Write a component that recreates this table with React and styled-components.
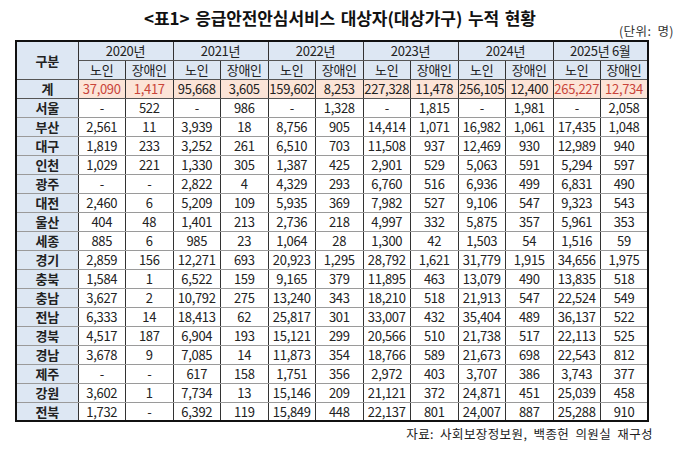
import styled, { createGlobalStyle } from 'styled-components';

const GlobalStyle = createGlobalStyle`
  html, body {
    margin: 0;
    padding: 0;
    background: #ffffff;
  }
  body {
    font-family: "Noto Sans CJK KR", "Noto Sans", sans-serif;
    color: #222;
  }
`;

const years = ['2020년', '2021년', '2022년', '2023년', '2024년', '2025년 6월'];

// 각 행: 지역명 + 12개 값 (연도별 노인 / 장애인)
const total = ['37,090', '1,417', '95,668', '3,605', '159,602', '8,253', '227,328', '11,478', '256,105', '12,400', '265,227', '12,734'];

const rows = [
  ['서울', '-', '522', '-', '986', '-', '1,328', '-', '1,815', '-', '1,981', '-', '2,058'],
  ['부산', '2,561', '11', '3,939', '18', '8,756', '905', '14,414', '1,071', '16,982', '1,061', '17,435', '1,048'],
  ['대구', '1,819', '233', '3,252', '261', '6,510', '703', '11,508', '937', '12,469', '930', '12,989', '940'],
  ['인천', '1,029', '221', '1,330', '305', '1,387', '425', '2,901', '529', '5,063', '591', '5,294', '597'],
  ['광주', '-', '-', '2,822', '4', '4,329', '293', '6,760', '516', '6,936', '499', '6,831', '490'],
  ['대전', '2,460', '6', '5,209', '109', '5,935', '369', '7,982', '527', '9,106', '547', '9,323', '543'],
  ['울산', '404', '48', '1,401', '213', '2,736', '218', '4,997', '332', '5,875', '357', '5,961', '353'],
  ['세종', '885', '6', '985', '23', '1,064', '28', '1,300', '42', '1,503', '54', '1,516', '59'],
  ['경기', '2,859', '156', '12,271', '693', '20,923', '1,295', '28,792', '1,621', '31,779', '1,915', '34,656', '1,975'],
  ['충북', '1,584', '1', '6,522', '159', '9,165', '379', '11,895', '463', '13,079', '490', '13,835', '518'],
  ['충남', '3,627', '2', '10,792', '275', '13,240', '343', '18,210', '518', '21,913', '547', '22,524', '549'],
  ['전남', '6,333', '14', '18,413', '62', '25,817', '301', '33,007', '432', '35,404', '489', '36,137', '522'],
  ['경북', '4,517', '187', '6,904', '193', '15,121', '299', '20,566', '510', '21,738', '517', '22,113', '525'],
  ['경남', '3,678', '9', '7,085', '14', '11,873', '354', '18,766', '589', '21,673', '698', '22,543', '812'],
  ['제주', '-', '-', '617', '158', '1,751', '356', '2,972', '403', '3,707', '386', '3,743', '377'],
  ['강원', '3,602', '1', '7,734', '13', '15,146', '209', '21,121', '372', '24,871', '451', '25,039', '458'],
  ['전북', '1,732', '-', '6,392', '119', '15,849', '448', '22,137', '801', '24,007', '887', '25,288', '910'],
];

const Page = styled.div`
  width: 680px;
  height: 456px;
  box-sizing: border-box;
  display: flex;
  flex-direction: column;
`;

const Header = styled.div`
  height: 40px;
  display: grid;
  grid-template-columns: 1fr auto 1fr;
  box-sizing: border-box;
`;

const Title = styled.h1`
  grid-column: 2;
  margin: 0;
  padding-top: 7px;
  font-size: 17px;
  line-height: 22px;
  font-weight: 700;
  color: #111;
  letter-spacing: -0.1px;
  word-spacing: 2px;
`;

const Unit = styled.div`
  grid-column: 3;
  justify-self: end;
  align-self: end;
  padding: 0 6px 2px 0;
  font-size: 12.5px;
  line-height: 15px;
  letter-spacing: 0.4px;
  word-spacing: 3px;
  color: #333;
`;

const TableWrap = styled.div`
  padding-left: 15px;
`;

const Table = styled.table`
  border-collapse: collapse;
  table-layout: fixed;
  width: 634px;
  border: 2px solid #111;
`;

const Row = styled.tr`
  height: 19px;
`;

const Cell = styled.td`
  padding: 0;
  text-align: center;
  vertical-align: middle;
  font-size: 13px;
  line-height: 17px;
  white-space: nowrap;
  letter-spacing: -0.3px;
  border-left: 1px solid #333;
  border-right: 1px solid #333;
  border-top: 1px solid #9a9a9a;
  border-bottom: 1px solid #9a9a9a;
`;

const HeadCell = styled(Cell)`
  background: #dde7f3;
  color: #222;
  font-weight: ${(p) => (p.$bold ? 700 : 400)};
  border-top: 1px solid #555;
  border-bottom: 1px solid #555;
`;

const RegionCell = styled(Cell)`
  background: #dde7f3;
  font-weight: 700;
  color: #222;
`;

const NumCell = styled(Cell)`
  color: ${(p) => (p.$red ? '#c9443a' : '#222')};
  background: ${(p) => (p.$total ? '#fce4d7' : '#ffffff')};
`;

const TotalRow = styled(Row)`
  & > td {
    border-bottom: 1px solid #555;
  }
`;

const Source = styled.div`
  align-self: flex-end;
  padding: 4px 27px 0 0;
  font-size: 12.5px;
  line-height: 16px;
  letter-spacing: 0.4px;
  word-spacing: 3px;
  color: #222;
`;

export default function App() {
  return (
    <>
      <GlobalStyle />
      <Page>
        <Header>
          <Title>&lt;표1&gt; 응급안전안심서비스 대상자(대상가구) 누적 현황</Title>
          <Unit>(단위: 명)</Unit>
        </Header>
        <TableWrap>
          <Table>
            <colgroup>
              <col style={{ width: '62px' }} />
              {total.map((_, i) => (
                <col key={i} />
              ))}
            </colgroup>
            <thead>
              <Row>
                <HeadCell as="th" rowSpan={2} $bold>
                  구분
                </HeadCell>
                {years.map((y) => (
                  <HeadCell as="th" key={y} colSpan={2}>
                    {y}
                  </HeadCell>
                ))}
              </Row>
              <Row>
                {years.map((y) => [
                  <HeadCell as="th" key={y + 'a'}>노인</HeadCell>,
                  <HeadCell as="th" key={y + 'b'}>장애인</HeadCell>,
                ])}
              </Row>
            </thead>
            <tbody>
              <TotalRow>
                <RegionCell>계</RegionCell>
                {total.map((v, i) => (
                  <NumCell key={i} $total $red={i < 2 || i > 9}>
                    {v}
                  </NumCell>
                ))}
              </TotalRow>
              {rows.map(([name, ...vals]) => (
                <Row key={name}>
                  <RegionCell>{name}</RegionCell>
                  {vals.map((v, i) => (
                    <NumCell key={i}>{v}</NumCell>
                  ))}
                </Row>
              ))}
            </tbody>
          </Table>
        </TableWrap>
        <Source>자료: 사회보장정보원, 백종헌 의원실 재구성</Source>
      </Page>
    </>
  );
}
